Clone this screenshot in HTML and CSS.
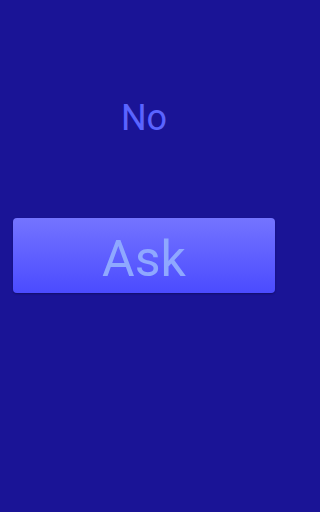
FILE: index.html
```html
<!DOCTYPE html>
<html>
<head>
<meta charset="utf-8">
<link rel="stylesheet" href="styles.css">
</head>
<body>
<div class="screen">
  <div class="answer">No</div>
  <button class="ask">Ask</button>
</div>
</body>
</html>
```
FILE: styles.css
```css
html, body {
  margin: 0;
  padding: 0;
  background: #1a1496;
}
.screen {
  width: 288px;
  height: 512px;
  display: flex;
  flex-direction: column;
  align-items: center;
  font-family: Roboto, "Liberation Sans", sans-serif;
}
.answer {
  margin-top: 96px;
  height: 44px;
  line-height: 44px;
  font-size: 36px;
  color: #5a64ff;
}
.ask {
  margin-top: 78px;
  width: 262px;
  height: 75px;
  border: none;
  border-radius: 4px;
  background: linear-gradient(#7474ff, #4b4bff);
  color: #8fa8ff;
  font-family: Roboto, "Liberation Sans", sans-serif;
  font-size: 50px;
  padding: 6px 0 0 0;
  box-shadow: 0 1px 2px rgba(0,0,0,0.3);
}
```
